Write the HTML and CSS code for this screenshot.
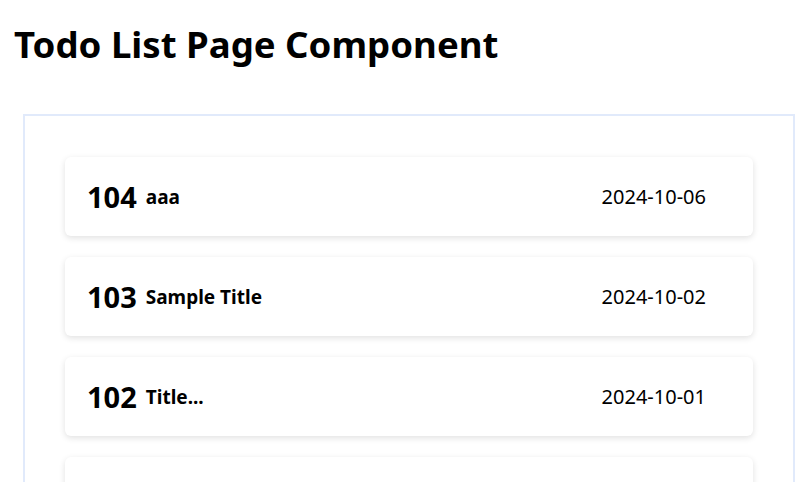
FILE: index.html
```html
<!DOCTYPE html>
<html lang="en">
<head>
  <meta charset="UTF-8">
  <title>Todo List Page Component</title>
  <link rel="stylesheet" href="styles.css">
</head>
<body>

<h1>Todo List Page Component</h1>

<div class="todo-list">
  <div class="todo-item">
    <div class="todo-head">
      <span class="todo-no">104</span>
      <span class="todo-title">aaa</span>
    </div>
    <span class="todo-date">2024-10-06</span>
  </div>
  <div class="todo-item">
    <div class="todo-head">
      <span class="todo-no">103</span>
      <span class="todo-title">Sample Title</span>
    </div>
    <span class="todo-date">2024-10-02</span>
  </div>
  <div class="todo-item">
    <div class="todo-head">
      <span class="todo-no">102</span>
      <span class="todo-title">Title...</span>
    </div>
    <span class="todo-date">2024-10-01</span>
  </div>
  <div class="todo-item">
    <div class="todo-head">
      <span class="todo-no">101</span>
      <span class="todo-title">Title</span>
    </div>
    <span class="todo-date">2024-09-30</span>
  </div>
</div>

</body>
</html>
```

FILE: styles.css
```css
body {
  font-family: "Noto Sans", "Noto Sans CJK KR", sans-serif;
  margin: 0;
  padding: 0 14px;
  color: #000;
  background: #fff;
}
h1 {
  font-size: 36.6px;
  font-weight: bold;
  margin: 18px 0 44px;
  line-height: 52px;
}
.todo-list {
  margin-left: 9px;
  width: 688px;
  border: 2px solid #e1eafb;
  padding: 41px 40px 20px;
}
.todo-item {
  display: flex;
  justify-content: space-between;
  align-items: center;
  height: 79px;
  padding: 0 47px 0 22px;
  margin-bottom: 21px;
  background: #fff;
  border-radius: 6px;
  box-shadow: 0 2px 6px rgba(0, 0, 0, 0.12);
}
.todo-head {
  display: flex;
  align-items: center;
  gap: 9px;
}
.todo-no {
  font-size: 29px;
  font-weight: bold;
}
.todo-title {
  font-size: 19px;
  font-weight: bold;
}
.todo-date {
  font-size: 20px;
}
```
